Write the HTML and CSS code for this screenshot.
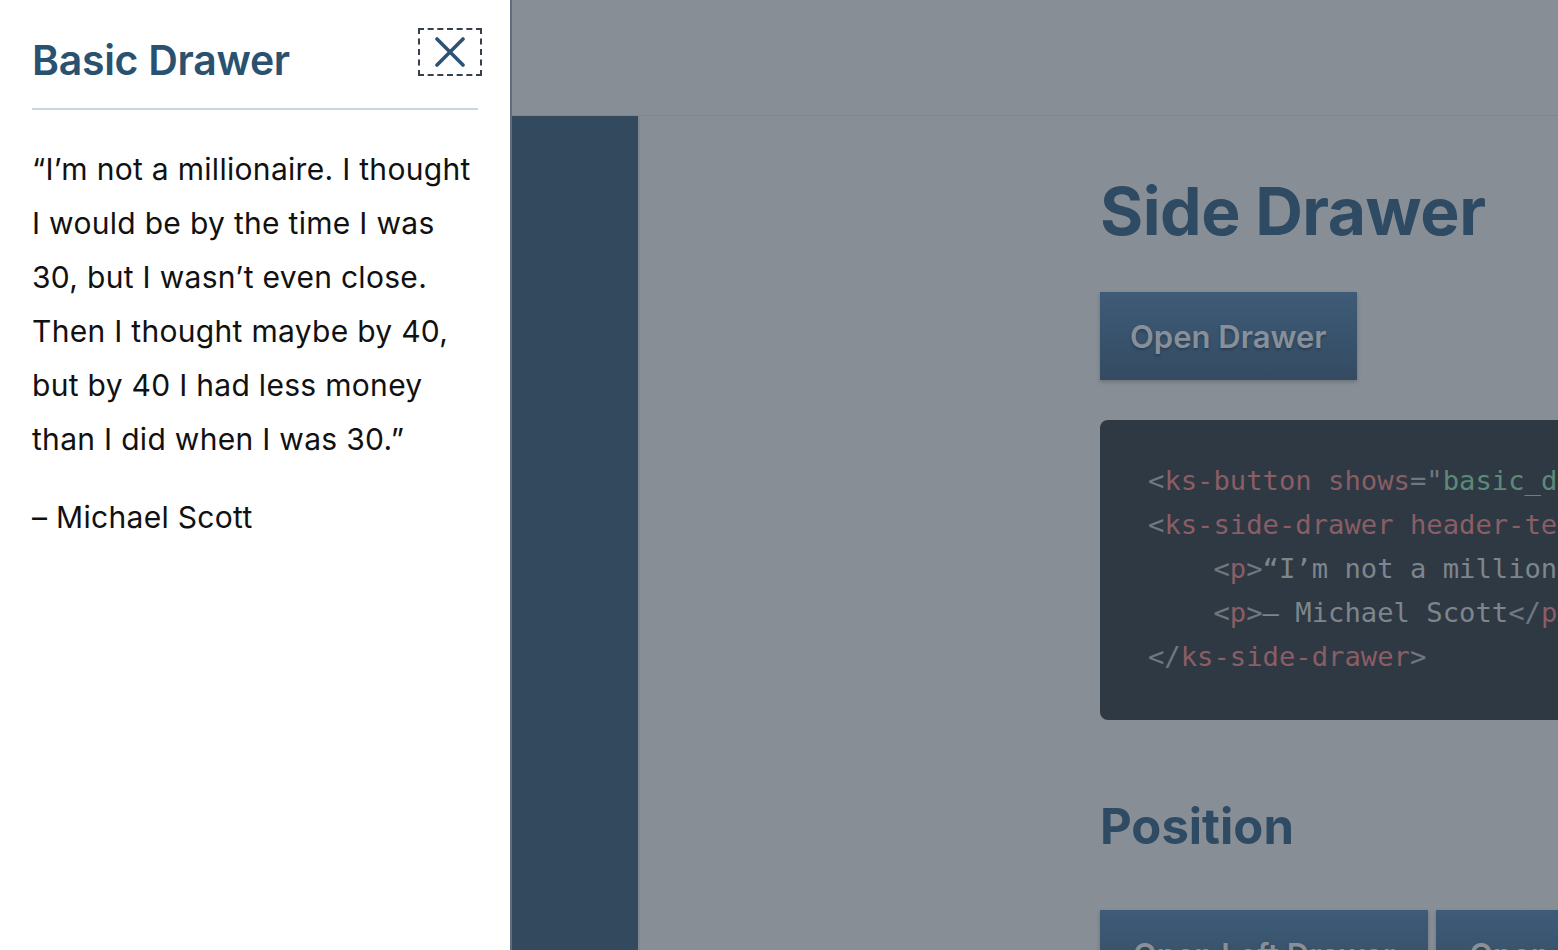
FILE: index.html
```html
<!DOCTYPE html>
<html lang="en">
<head>
<meta charset="utf-8">
<title>Side Drawer</title>
<link rel="stylesheet" href="styles.css">
</head>
<body>
<div class="app">
  <aside class="drawer">
    <header class="drawer-header">
      <h2 class="drawer-title">Basic Drawer</h2>
      <button class="close-btn" aria-label="Close">
        <svg width="30" height="30" viewBox="0 0 30 30"><path d="M2 2 L28 28 M28 2 L2 28" stroke="#2c5373" stroke-width="3.6" stroke-linecap="round" fill="none"/></svg>
      </button>
    </header>
    <div class="drawer-body">
      <p>“I’m not a millionaire. I thought I would be by the time I was 30, but I wasn’t even close. Then I thought maybe by 40, but by 40 I had less money than I did when I was 30.”</p>
      <p>– Michael Scott</p>
    </div>
  </aside>
  <div class="page">
    <div class="topbar"></div>
    <div class="page-row">
      <nav class="sidebar"></nav>
      <main class="main">
        <h1 class="page-title">Side Drawer</h1>
        <button class="btn">Open Drawer</button>
        <pre class="code"><span class="p">&lt;</span><span class="t">ks-button</span> <span class="t">shows</span><span class="p">="</span><span class="s">basic_drawer</span><span class="p">"&gt;</span>Open Drawer<span class="p">&lt;/</span><span class="t">ks-button</span><span class="p">&gt;</span>
<span class="p">&lt;</span><span class="t">ks-side-drawer</span> <span class="t">header-text</span><span class="p">="</span><span class="s">Basic Drawer</span><span class="p">"&gt;</span>
    <span class="p">&lt;</span><span class="t">p</span><span class="p">&gt;</span>“I’m not a millionaire.<span class="p">&lt;/</span><span class="t">p</span><span class="p">&gt;</span>
    <span class="p">&lt;</span><span class="t">p</span><span class="p">&gt;</span>– Michael Scott<span class="p">&lt;/</span><span class="t">p</span><span class="p">&gt;</span>
<span class="p">&lt;/</span><span class="t">ks-side-drawer</span><span class="p">&gt;</span></pre>
        <h2 class="section-title">Position</h2>
        <div class="btn-row">
          <button class="btn btn-pos">Open Left Drawer</button>
          <button class="btn btn-pos">Open Right Drawer</button>
        </div>
      </main>
    </div>
  </div>
</div>
</body>
</html>
```
FILE: styles.css
```css
* { box-sizing: border-box; }
html, body { margin: 0; padding: 0; height: 100%; overflow: hidden; }
body { font-family: Inter, "Noto Sans", sans-serif; background: #878e96; }

.app { display: flex; height: 950px; }

.drawer {
  width: 512px;
  flex: none;
  background: #fff;
  border-right: 2px solid #5d6d7e;
  padding: 28px 32px 0 32px;
}
.drawer-header {
  display: flex;
  justify-content: space-between;
  align-items: flex-start;
  border-bottom: 2px solid #c9d4dd;
  height: 82px;
}
.drawer-title {
  margin: 7px 0 0;
  font-size: 41px;
  font-weight: 600;
  color: #2b5171;
  letter-spacing: -0.3px;
}
.close-btn {
  width: 64px; height: 48px;
  margin-right: -4px;
  background: none;
  border: 2px dashed #36404a;
  display: flex; align-items: center; justify-content: center;
  padding: 0;
}
.drawer-body { padding-top: 32px; }
.drawer-body p {
  margin: 0 0 24px;
  font-size: 30px;
  line-height: 54px;
  color: #111;
  letter-spacing: 0.3px;
}

.page { flex: 1; display: flex; flex-direction: column; min-width: 0; }
.topbar { height: 116px; flex: none; border-bottom: 1px solid #7f8790; }
.page-row { flex: 1; display: flex; min-height: 0; }
.sidebar { width: 128px; flex: none; background: #334a5e; border-right: 2px solid #80878f; }
.main { flex: 1; padding: 50px 0 0 460px; overflow: hidden; min-width: 0; }

.page-title {
  margin: 0 0 36px;
  font-size: 66px;
  line-height: 90px;
  font-weight: 700;
  color: #2f4b63;
  letter-spacing: -0.5px;
}
.btn {
  display: block;
  flex: none;
  height: 88px;
  padding: 0 30px;
  border: none;
  white-space: nowrap;
  font-family: Inter, "Noto Sans", sans-serif;
  font-size: 31px;
  font-weight: 600;
  color: #87909a;
  background: linear-gradient(#3e5b77, #344b62);
  text-shadow: 0 2px 3px rgba(0,0,0,0.25);
  box-shadow: 0 2px 4px rgba(0,0,0,0.2);
}
.btn-pos { padding: 0 33px; }
.code {
  margin: 40px 0 0;
  width: 600px;
  padding: 39px 48px 41px;
  background: #2f3943;
  border-radius: 8px;
  font-family: "DejaVu Sans Mono", monospace;
  font-size: 27.2px;
  line-height: 44px;
  color: #7d858d;
  white-space: pre;
  overflow: hidden;
}
.code .p { color: #6f7780; }
.code .t { color: #8b5d65; }
.code .s { color: #5d8a78; }

.section-title {
  margin: 72px 0 48px;
  font-size: 49px;
  line-height: 70px;
  font-weight: 700;
  color: #2f4b63;
}
.btn-row { display: flex; gap: 8px; }
```
